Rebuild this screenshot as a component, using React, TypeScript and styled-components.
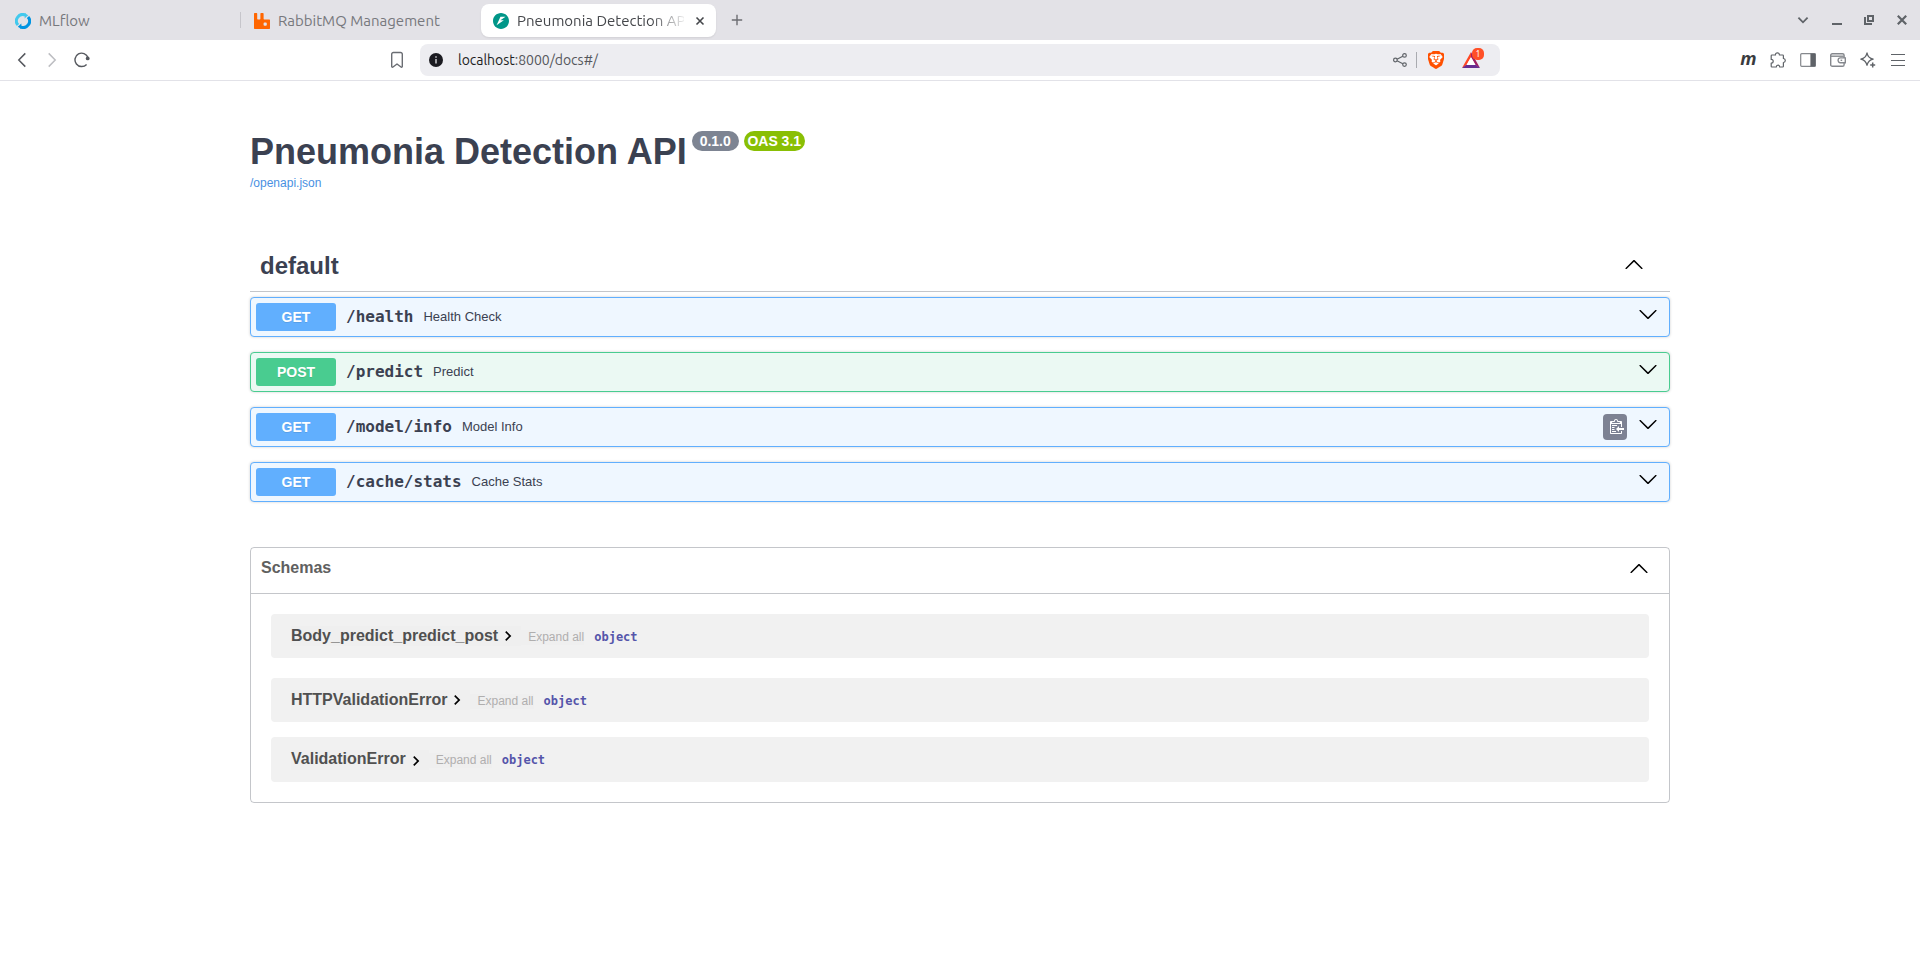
import React from 'react';
import styled, { createGlobalStyle } from 'styled-components';
import { SiRabbitmq, SiBrave, SiFastapi } from 'react-icons/si';

const GlobalStyle = createGlobalStyle`
  *, *::before, *::after { box-sizing: border-box; }
  body {
    margin: 0;
    background: #fff;
    font-family: "Liberation Sans", Arial, sans-serif;
    color: #3b4151;
  }
  svg { display: block; flex: none; }
`;

const Window = styled.div`
  display: flex;
  flex-direction: column;
  width: 1920px;
  height: 961px;
  overflow: hidden;
`;

/* ---------- Browser chrome ---------- */

const TabStrip = styled.header`
  display: flex;
  align-items: center;
  height: 40px;
  background: #e3e2e7;
  color: #5f6368;
  font: 15px/20px Ubuntu, "Noto Sans", sans-serif;
`;

const Tab = styled.div<{ $width: number; $inset?: number }>`
  display: flex;
  align-items: center;
  width: ${(p) => p.$width}px;
  height: 34px;
  padding-left: ${(p) => p.$inset ?? 15}px;
  margin-top: 2px;
  gap: 8px;
  color: #77787d;
`;

const ActiveTab = styled(Tab)`
  height: 33px;
  margin-top: 1px;
  padding: 0 10px 0 12px;
  border-radius: 8px;
  background: #fff;
  color: #45474b;
  box-shadow: 0 1px 2px rgba(0, 0, 0, 0.08);
`;

const TabDivider = styled.span`
  width: 1px;
  height: 16px;
  background: #c6c5cb;
`;

const TabTitle = styled.span`
  white-space: nowrap;
`;

const FadedTitle = styled(TabTitle)`
  width: 167px;
  margin-right: 3px;
  overflow: hidden;
  mask-image: linear-gradient(to right, #000 80%, transparent 102%);
`;

const IconCell = styled.span<{ $w: number }>`
  display: flex;
  justify-content: center;
  align-items: center;
  flex: none;
  width: ${(p) => p.$w}px;
  height: 24px;
`;

const WindowControls = styled.div`
  display: flex;
  margin-left: auto;
  padding-right: 1px;
`;

const Toolbar = styled.div`
  display: flex;
  align-items: center;
  height: 41px;
  flex: none;
  border-bottom: 1px solid #e2e2e8;
  background: #fff;
  color: #5f6368;
`;

const NavButtons = styled.div`
  display: flex;
  padding-left: 7px;
  width: 382px;
`;

const AddressBar = styled.div`
  display: flex;
  align-items: center;
  width: 1080px;
  height: 32px;
  margin-left: 8px;
  border-radius: 8px;
  background: #ededf1;
`;

const Address = styled.span`
  margin-left: 6px;
  font: 14px/20px Ubuntu, "Noto Sans", sans-serif;
  letter-spacing: -0.02px;
  color: #55575c;
  b { font-weight: 400; color: #1d1e22; }
`;

const AddressActions = styled.div`
  display: flex;
  align-items: center;
  margin-left: auto;
  padding-right: 14px;
`;

const ActionDivider = styled.span`
  width: 1px;
  height: 16px;
  background: #a9abb0;
`;

const RewardCell = styled(IconCell)`
  position: relative;
`;

const RewardCount = styled.span`
  position: absolute;
  left: 17px;
  top: 0;
  width: 12px;
  height: 12px;
  border-radius: 5px;
  background: #ff5027;
  color: #fff;
  font: 8px/12px "Noto Sans", sans-serif;
  text-align: center;
`;

const Extensions = styled.div`
  display: flex;
  align-items: center;
  margin-left: auto;
  padding-right: 7px;
`;

const MonoMark = styled.span`
  padding-bottom: 4px;
  font: italic 700 18px/20px "Open Sans", "Noto Sans", sans-serif;
  color: #3a3b3e;
`;

/* ---------- API documentation ---------- */

const Page = styled.main`
  width: 1420px;
  margin: 0 auto;
  padding-top: 50px;
`;

const TitleRow = styled.div`
  display: flex;
  align-items: flex-start;
  height: 41px;
`;

const Title = styled.h1`
  margin: 0 5px 0 0;
  font-size: 36px;
  line-height: 41px;
`;

const Badge = styled.span<{ $bg: string; $width: number }>`
  width: ${(p) => p.$width}px;
  height: 20px;
  margin-right: 5px;
  border-radius: 10px;
  background: ${(p) => p.$bg};
  color: #fff;
  font-size: 14px;
  font-weight: 700;
  line-height: 20px;
  text-align: center;
  white-space: nowrap;
`;

const SpecLink = styled.a`
  display: block;
  margin-top: 4px;
  font-size: 12px;
  line-height: 14px;
  color: #4990e2;
`;

const TagHeader = styled.div`
  display: flex;
  align-items: center;
  justify-content: space-between;
  height: 56px;
  margin: 46px 0 5px;
  padding: 0 26px 0 10px;
  border-bottom: 1px solid rgba(59, 65, 81, 0.3);
  font-size: 24px;
  font-weight: 700;
  line-height: 28px;
`;

const TagName = styled.span`
  padding-top: 5px;
`;

const Operations = styled.div`
  display: flex;
  flex-direction: column;
  gap: 15px;
`;

const Operation = styled.div<{ $post?: boolean }>`
  display: flex;
  align-items: center;
  height: 40px;
  padding: 5px 11px 5px 5px;
  border: 1px solid ${(p) => (p.$post ? '#49cc90' : '#61affe')};
  border-radius: 4px;
  background: ${(p) => (p.$post ? '#ebf9f3' : '#eff7ff')};
  box-shadow: 0 0 3px rgba(0, 0, 0, 0.19);
`;

const Method = styled.span<{ $post?: boolean }>`
  width: 80px;
  height: 28px;
  border-radius: 3px;
  background: ${(p) => (p.$post ? '#49cc90' : '#61affe')};
  color: #fff;
  font-size: 14px;
  font-weight: 700;
  line-height: 28px;
  text-align: center;
  text-shadow: 0 1px 0 rgba(0, 0, 0, 0.1);
`;

const Path = styled.span`
  margin: 0 10px;
  padding-bottom: 1px;
  font: 700 16px/20px "DejaVu Sans Mono", monospace;
`;

const Summary = styled.span`
  flex: 1;
  padding-bottom: 1px;
  font-size: 13px;
`;

const CopyButton = styled.button`
  display: flex;
  align-items: center;
  width: 24px;
  height: 26px;
  margin-right: 11px;
  padding: 0 0 0 5px;
  border: 0;
  border-radius: 4px;
  background: #7d8293;
`;

const ArrowSlot = styled.span`
  padding-bottom: 6px;
`;

const Schemas = styled.section`
  height: 256px;
  margin-top: 45px;
  border: 1px solid rgba(59, 65, 81, 0.3);
  border-radius: 4px;
`;

const SchemasHeader = styled.div`
  display: flex;
  align-items: flex-start;
  justify-content: space-between;
  height: 46px;
  padding: 10px 20px 0 10px;
  border-bottom: 1px solid rgba(59, 65, 81, 0.3);
  color: #606060;
  font-size: 16px;
  font-weight: 700;
  line-height: 20px;
`;

const Model = styled.div<{ $top: number; $height: number }>`
  display: flex;
  align-items: center;
  height: ${(p) => p.$height}px;
  margin: ${(p) => p.$top}px 20px 0;
  padding-left: 20px;
  border-radius: 4px;
  background: #f1f1f1;
`;

const ModelName = styled.span<{ $arrowDrop?: number }>`
  display: flex;
  align-items: center;
  height: 20px;
  padding-right: 3px;
  background: #efefef;
  color: #505050;
  font-size: 16px;
  font-weight: 700;
  line-height: 18px;
  svg { margin-top: ${(p) => p.$arrowDrop ?? 0}px; }
`;

const ModelLabel = styled.span`
  padding-bottom: 1px;
`;

const ExpandAll = styled.span`
  margin: 2px 10px 0 0;
  padding-left: 7px;
  background: #efefef;
  color: #afaeae;
  font-size: 12px;
  line-height: 15px;
`;

const ModelType = styled.span`
  margin-top: 2px;
  color: #5555aa;
  font: 700 12px/15px "DejaVu Sans Mono", monospace;
`;

const Arrow = ({ up }: { up?: boolean }) => (
  <svg width="20" height="20" viewBox="0 0 20 20" fill="#000">
    <path
      d={
        up
          ? 'M17.418 14.908c.272.268.709.268.979 0s.271-.701 0-.969l-7.908-7.83c-.27-.268-.707-.268-.979 0l-7.908 7.83c-.27.268-.271.701 0 .969.271.268.709.268.979 0L10 7.767l7.418 7.141z'
          : 'M17.418 6.109c.272-.268.709-.268.979 0s.271.701 0 .969l-7.908 7.83c-.27.268-.707.268-.979 0l-7.908-7.83c-.27-.268-.271-.701 0-.969.271-.268.709-.268.979 0L10 13.25l7.418-7.141z'
      }
    />
  </svg>
);

const operations = [
  { method: 'GET', path: '/health', summary: 'Health Check' },
  { method: 'POST', path: '/predict', summary: 'Predict' },
  { method: 'GET', path: '/model/info', summary: 'Model Info', copy: true },
  { method: 'GET', path: '/cache/stats', summary: 'Cache Stats' },
];

const models = [
  { name: 'Body_predict_predict_post', top: 20, height: 44 },
  { name: 'HTTPValidationError', top: 20, height: 44 },
  { name: 'ValidationError', top: 15, height: 45, arrowDrop: 2 },
];

const MlflowIcon = () => (
  <svg width="16" height="16" viewBox="0 0 16 16" fill="none" strokeWidth="3">
    <path d="M3 12.100A6.400 6.400 0 0 1 10.500 2.100" stroke="#43c9ed" />
    <path d="M13 3.900A6.400 6.400 0 0 1 5.500 13.900" stroke="#0194e2" />
    <path d="M10 .2l3.200 2.100-3.600 3.300z" fill="#43c9ed" />
    <path d="M6 15.800l-3.200-2.100 3.600-3.300z" fill="#0194e2" />
  </svg>
);

const BrowserTabs = () => (
  <TabStrip>
    <Tab $width={240}>
      <MlflowIcon />
      <TabTitle>MLflow</TabTitle>
    </Tab>
    <TabDivider />
    <Tab $width={240} $inset={13}>
      <SiRabbitmq size={16} color="#ff6600" />
      <TabTitle>RabbitMQ Management</TabTitle>
    </Tab>
    <ActiveTab $width={235}>
      <svg width="16" height="16" viewBox="0 0 24 24">
        <circle cx="12" cy="12" r="11" fill="#fff" />
        <SiFastapi size={24} color="#009688" />
      </svg>
      <FadedTitle>Pneumonia Detection API</FadedTitle>
      <svg width="10" height="10" viewBox="0 0 10 10" stroke="#45474b" strokeWidth="1.6">
        <path d="M1.500 1.500l7 7M8.500 1.500l-7 7" />
      </svg>
    </ActiveTab>
    <IconCell $w={42}>
      <svg width="12" height="12" viewBox="0 0 12 12" stroke="#6d6e73" strokeWidth="1.4">
        <path d="M6 .8v10.400M.8 6h10.400" />
      </svg>
    </IconCell>
    <WindowControls>
      <IconCell $w={34}>
        <svg width="12" height="12" viewBox="0 0 12 12" fill="none" stroke="#5f6368" strokeWidth="1.8">
          <path d="M1.400 3.600L6 8.300l4.600-4.700" />
        </svg>
      </IconCell>
      <IconCell $w={34}>
        <svg width="12" height="12" viewBox="0 0 12 12" fill="#5f6368">
          <path d="M1 9h10v2H1z" />
        </svg>
      </IconCell>
      <IconCell $w={30}>
        <svg width="12" height="12" viewBox="0 0 12 12" fill="none" stroke="#5f6368" strokeWidth="2">
          <path d="M5 2h5v5H5zM2 3v7h7" />
        </svg>
      </IconCell>
      <IconCell $w={35}>
        <svg width="12" height="12" viewBox="0 0 12 12" stroke="#5f6368" strokeWidth="2.2">
          <path d="M1.800 1.800l8.400 8.400M10.200 1.800l-8.400 8.400" />
        </svg>
      </IconCell>
    </WindowControls>
  </TabStrip>
);

const BrowserToolbar = () => (
  <Toolbar>
    <NavButtons>
      <IconCell $w={30}>
        <svg width="16" height="16" viewBox="0 0 16 16" fill="none" stroke="#55585e" strokeWidth="1.5">
          <path d="M11.300 1.400L4.800 8l6.500 6.600" />
        </svg>
      </IconCell>
      <IconCell $w={30}>
        <svg width="16" height="16" viewBox="0 0 16 16" fill="none" stroke="#bdbec2" strokeWidth="1.5">
          <path d="M4.700 1.400L11.200 8l-6.500 6.600" />
        </svg>
      </IconCell>
      <IconCell $w={30}>
        <svg width="16" height="16" viewBox="0 0 16 16" fill="none" stroke="#55585e" strokeWidth="1.4">
          <path d="M14 5.600A6.700 6.700 0 1 0 12.600 12.400" />
          <circle cx="13.700" cy="6.400" r="1.900" fill="#55585e" stroke="none" />
        </svg>
      </IconCell>
    </NavButtons>
    <IconCell $w={30}>
      <svg width="14" height="18" viewBox="0 0 14 18" fill="none" stroke="#6a6d73" strokeWidth="1.4" strokeLinejoin="round">
        <path d="M1.700 3.200a1.700 1.700 0 0 1 1.700-1.700h7.200a1.700 1.700 0 0 1 1.700 1.700v12.200a.8.8 0 0 1-1.300.6L7 13l-4 3a.8.8 0 0 1-1.300-.6z" />
      </svg>
    </IconCell>
    <AddressBar>
      <IconCell $w={32}>
        <svg width="14" height="14" viewBox="0 0 14 14">
          <circle cx="7" cy="7" r="7" fill="#1b1b21" />
          <path d="M6.300 3.300h1.400v1.400H6.300zM6.300 5.900h1.400v4.600H6.300z" fill="#d8d8dc" />
        </svg>
      </IconCell>
      <Address><b>localhost</b>:8000/docs#/</Address>
      <AddressActions>
        <IconCell $w={32}>
          <svg width="14" height="14" viewBox="0 0 14 14" fill="none" stroke="#5f6368" strokeWidth="1.2">
            <circle cx="2.400" cy="7" r="1.8" />
            <circle cx="11.500" cy="2.400" r="1.8" />
            <circle cx="11.500" cy="11.600" r="1.8" />
            <path d="M4 6.200l5.800-3M4 7.800l5.800 3" />
          </svg>
        </IconCell>
        <ActionDivider />
        <IconCell $w={38}>
          <svg width="16" height="18" viewBox="2.5 0 19 24" preserveAspectRatio="none">
            <path d="M6 4h12l1 6-3 8-4 4-4-4-3-8z" fill="#fff" />
            <SiBrave size={24} color="#ff5000" />
          </svg>
        </IconCell>
        <RewardCell $w={31}>
          <svg width="18" height="16" viewBox="0 0 18 16">
            <path d="M9 0L0 16l4.400-2.800L9 5.200z" fill="#ff4724" />
            <path d="M9 0l9 16-4.400-2.800L9 5.200z" fill="#9e1f63" />
            <path d="M0 16h18l-4.400-3.200H4.400z" fill="#662d91" />
            <path d="M9 5l4.500 7.900H4.500z" fill="#fff" />
          </svg>
          <RewardCount>1</RewardCount>
        </RewardCell>
      </AddressActions>
    </AddressBar>
    <Extensions>
      <IconCell $w={29}><MonoMark>m</MonoMark></IconCell>
      <IconCell $w={30}>
        <svg width="16" height="16" viewBox="0 0 16 16" fill="none" stroke="#5f6368" strokeWidth="1.2" strokeLinejoin="round">
          <path d="M2 3h3.500C5.300 1.500 6.300.8 7.400.8s2.100.7 1.900 2.200h3.300c.5 0 .8.3.8.8v2.700c1.200.1 1.900.9 1.900 2s-.7 1.900-1.900 2v3.700c0 .5-.3.800-.8.800H9.700c0-1.200-.6-1.900-1.700-1.900s-1.700.7-1.700 1.900H2c-.5 0-.8-.3-.8-.8v-3c1.300 0 2-.7 2-1.900s-.7-1.900-2-1.900V3.800c0-.5.3-.8.8-.8z" />
        </svg>
      </IconCell>
      <IconCell $w={30}>
        <svg width="16" height="14" viewBox="0 0 16 14" fill="none" stroke="#5f6368" strokeWidth="1.2">
          <rect x=".7" y=".7" width="14.6" height="12.6" rx="1" stroke="#85888d" />
          <path d="M11 1h4v12h-4z" fill="#5f6368" />
        </svg>
      </IconCell>
      <IconCell $w={30}>
        <svg width="16" height="14" viewBox="0 0 16 14" fill="none" stroke="#85888d" strokeWidth="1.4">
          <rect x=".7" y=".7" width="13.4" height="12.6" rx="1.6" />
          <path d="M1 3.200h12.800" />
          <path d="M15.300 4.900H10A2.100 2.100 0 0 0 8.100 7v.6A2.100 2.100 0 0 0 10 9.700h5.300z" fill="#fff" />
          <path d="M10.600 7.300h1.600" />
        </svg>
      </IconCell>
      <IconCell $w={30}>
        <svg width="16" height="16" viewBox="0 0 16 16" fill="none" stroke="#5f6368" strokeWidth="1.2" strokeLinejoin="round">
          <path d="M7 .9c.8 4 2.200 5.500 6.200 6.300C9.200 8 7.800 9.500 7 13.500 6.200 9.500 4.800 8 .8 7.200 4.800 6.400 6.200 4.900 7 .9z" />
          <path d="M12.700 10.400v5M10.200 12.900h5" strokeWidth="1.5" />
        </svg>
      </IconCell>
      <IconCell $w={30}>
        <svg width="14" height="14" viewBox="0 0 14 14" stroke="#5f6368" strokeWidth="1.2">
          <path d="M0 1.500h14M0 7.500h14M0 12.500h14" />
        </svg>
      </IconCell>
    </Extensions>
  </Toolbar>
);

export default function App() {
  return (
    <Window>
      <GlobalStyle />
      <BrowserTabs />
      <BrowserToolbar />
      <Page>
        <TitleRow>
          <Title>Pneumonia Detection API</Title>
          <Badge $bg="#7d8492" $width={47}>0.1.0</Badge>
          <Badge $bg="#89bf04" $width={61}>OAS 3.1</Badge>
        </TitleRow>
        <SpecLink>/openapi.json</SpecLink>
        <TagHeader>
          <TagName>default</TagName>
          <Arrow up />
        </TagHeader>
        <Operations>
          {operations.map((op) => (
            <Operation key={op.path} $post={op.method === 'POST'}>
              <Method $post={op.method === 'POST'}>{op.method}</Method>
              <Path>{op.path}</Path>
              <Summary>{op.summary}</Summary>
              {op.copy && (
                <CopyButton aria-label="Copy path">
                  <svg width="16" height="16" viewBox="0 0 16 16" fill="#fff">
                    <path d="M4 12h4v1H4v-1zm5-6H4v1h5V6zm2 3V7l-3 3 3 3v-2h5V9h-5zM6.500 8H4v1h2.500V8zM4 11h2.500v-1H4v1zm9 1h1v2c-.02.28-.11.52-.3.7-.19.18-.42.28-.7.3H3c-.55 0-1-.45-1-1V3c0-.55.45-1 1-1h3c0-1.110.89-2 2-2 1.110 0 2 .89 2 2h3c.55 0 1 .45 1 1v5h-1V5H3v9h10v-2zM4 4h8c0-.55-.45-1-1-1h-1c-.55 0-1-.45-1-1s-.45-1-1-1-1 .45-1 1-.45 1-1 1H5c-.55 0-1 .45-1 1z" />
                  </svg>
                </CopyButton>
              )}
              <ArrowSlot><Arrow /></ArrowSlot>
            </Operation>
          ))}
        </Operations>
        <Schemas>
          <SchemasHeader>
            Schemas
            <Arrow up />
          </SchemasHeader>
          {models.map((model) => (
            <Model key={model.name} $top={model.top} $height={model.height}>
              <ModelName $arrowDrop={model.arrowDrop}>
                <ModelLabel>{model.name}</ModelLabel>
                <svg width="20" height="20" viewBox="0 0 24 24" fill="#000">
                  <path d="M10 6L8.590 7.410 13.170 12l-4.580 4.590L10 18l6-6z" />
                </svg>
              </ModelName>
              <ExpandAll>Expand all</ExpandAll>
              <ModelType>object</ModelType>
            </Model>
          ))}
        </Schemas>
      </Page>
    </Window>
  );
}
